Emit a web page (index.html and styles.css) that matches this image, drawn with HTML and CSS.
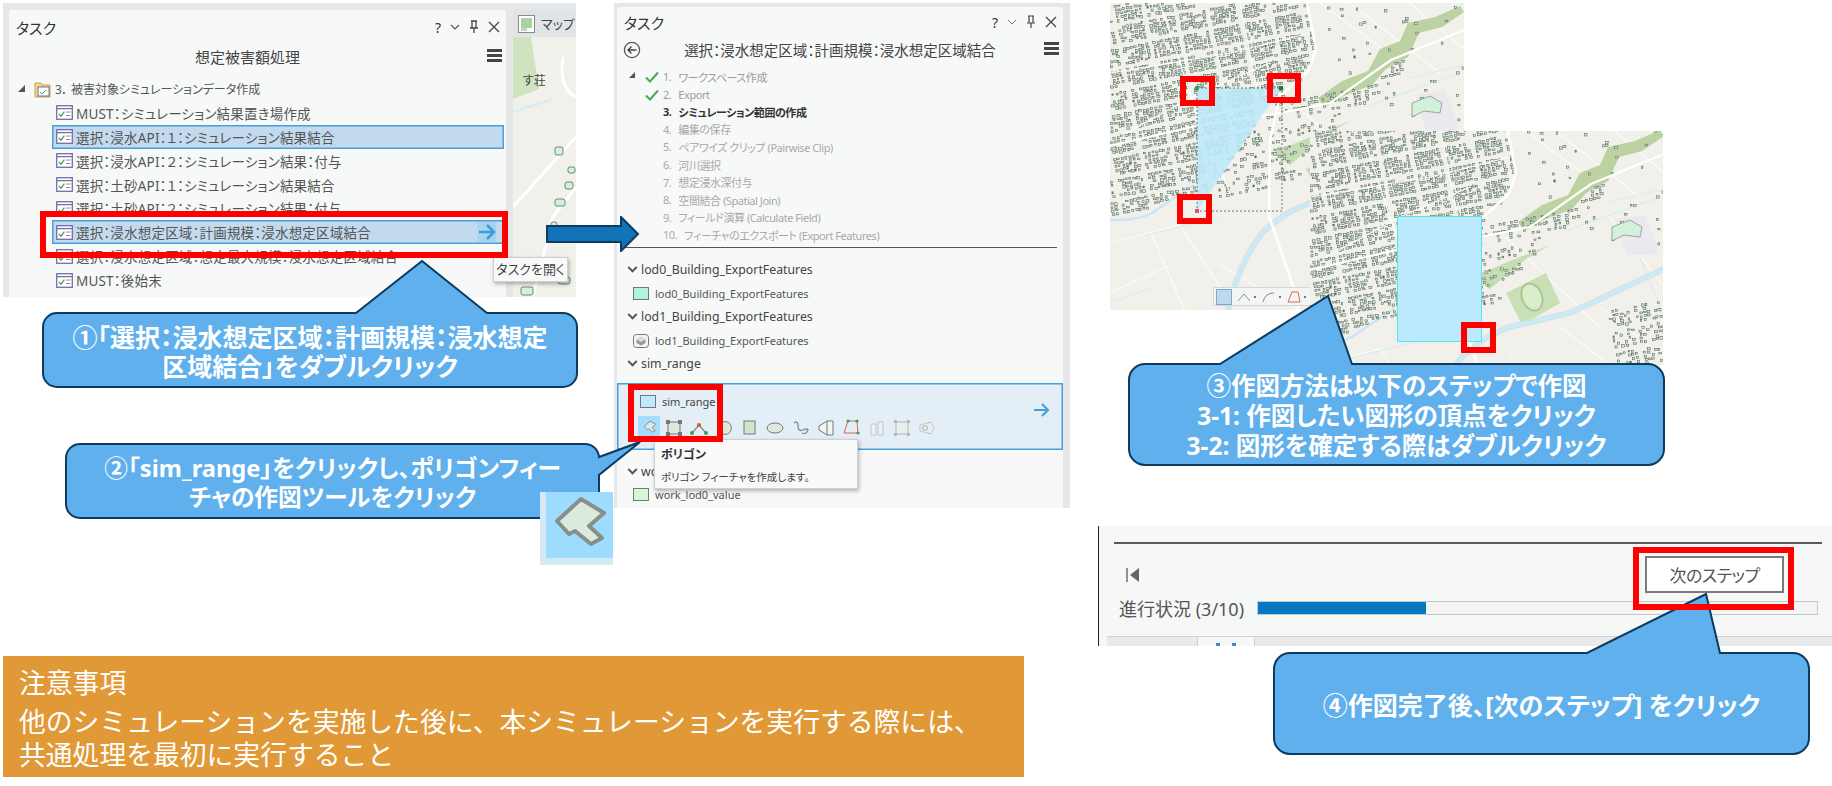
FILE: index.html
```html
<!DOCTYPE html>
<html lang="ja">
<head>
    <meta charset="UTF-8">
    <title>シミュレーション範囲の作成</title>
    <link rel="stylesheet" href="styles.css">
</head>
<body>
<!-- shared icons and the base map -->
<svg class="defs" aria-hidden="true">
    <defs>
        <filter id="soft"><feGaussianBlur stdDeviation=".25"/></filter>
        <symbol id="basemap" viewBox="0 0 354 320">
            <rect width="354" height="320" fill="#f1f0ea"/>
            <path d="M210 0 L292 60 M240 0 L330 70 M300 0 L354 46 M0 240 L70 222 L120 300 M40 228 L80 320 M0 290 L60 262 M110 262 L210 320 M200 230 L290 320 M250 200 L354 280 M290 180 L354 230 M195 110 L290 200 M300 90 L354 160" fill="none" stroke="#fbfbf8" stroke-width="1.2"/>
            <path d="M36 232 L110 214 M170 300 L260 240 M0 300 L40 285 M300 75 L354 62 M255 104 L345 72 M330 130 L354 190" fill="none" stroke="#d4ecf6" stroke-width="1.1"/>
            <path d="M306 92 L335 88 L347 118 L347 128 L316 128 Z" fill="#ece8f0"/>
            <path d="M208 95 L232 78 L258 68 L270 46 L290 38 L298 20 L325 14 L350 3 L354 9 L332 24 L309 30 L298 54 L276 66 L262 82 L236 92 L214 104 Z" fill="#bcd2a2"/>
            <path d="M162 150 L205 132 L240 118 L216 132 L180 162 Z" fill="#c6dcb2"/>
            <path d="M196 166 L236 146 L250 176 L212 198 Z" fill="#c9dfb6"/>
            <ellipse cx="222" cy="170" rx="10" ry="14" fill="#dcedcc" stroke="#a9c994" stroke-width="2" transform="rotate(-22 222 170)"/>
            <path d="M0 217 Q26 218 42 210 Q62 196 84 182" fill="none" stroke="#c6e6f5" stroke-width="2.4"/>
            <path d="M118 307 Q128 262 152 230 Q172 210 200 200 L260 186 L354 142" fill="none" stroke="#dcdfd8" stroke-width="6"/>
            <path d="M118 307 Q128 262 152 230 Q172 210 200 200 L260 186 L354 142" fill="none" stroke="#c8ebfa" stroke-width="4"/>
            <g id="houses" filter="url(#soft)" fill="#d3f0da" stroke="#56625a" stroke-width=".55"></g>
            <path d="M302 100 L320 93 L332 100 L330 110 L314 108 L302 114 Z" fill="#d3f0da" stroke="#69756c" stroke-width=".6"/>
            <path d="M197 0 L206 46 L199 67 L170 93 L160 137 L159 213 L182 280 L192 320" fill="none" stroke="#fff" stroke-width="2.6"/>
            <path d="M0 143 L86 123 L170 110 L220 100 L281 57 L354 27" fill="none" stroke="#fff" stroke-width="2.2"/>
            <path d="M50 0 L90 120 L120 190 M0 70 L120 50 L200 30 M16 130 L90 90 L160 60 M130 0 L150 100" fill="none" stroke="#fff" stroke-width="1.1"/>
        </symbol>
        <symbol id="task-icon" viewBox="0 0 17 15">
            <rect x=".7" y=".7" width="15.6" height="13.6" fill="#fff" stroke="#7a6bab" stroke-width="1.3"/>
            <path d="M1 3.6H16" stroke="#7a6bab" stroke-width="1.3"/>
            <path d="M3 9L5 11.2L8.4 6.6" fill="none" stroke="#3f9e4d" stroke-width="1.2"/>
            <path d="M10 7H14.5M10 10.5H14.5" stroke="#8c8c9c"/>
        </symbol>
        <symbol id="polygon-icon" viewBox="0 0 73 73">
            <path d="M17 30L41 8L64 22L49 35L62 47L51 53L35 40L29 43Z" fill="#dceadb" stroke="#85908a" stroke-width="4" stroke-linejoin="round"/>
        </symbol>
    </defs>
</svg>

<main class="canvas">
    <!-- first screenshot: task list -->
    <section class="shot shot-tasks">
        <div class="pane">
            <div class="pane-title">
                <span>タスク</span>
                <span class="window-tools">
                    <i>?</i>
                    <svg width="10" height="10" viewBox="0 0 10 10"><path d="M1 3L5 7L9 3" fill="none" stroke="#555" stroke-width="1.2"/></svg>
                    <svg width="10" height="14" viewBox="0 0 10 14"><path d="M2 1H8M3 1V8H7V1M1 8H9M5 8V13" fill="none" stroke="#444" stroke-width="1.3"/></svg>
                    <svg width="12" height="12" viewBox="0 0 12 12"><path d="M1 1L11 11M11 1L1 11" stroke="#444" stroke-width="1.3"/></svg>
                </span>
            </div>
            <div class="pane-sub pane-sub-tasks">
                <span>想定被害額処理</span>
                <span class="burger"></span>
            </div>
            <ul class="tree">
                <li class="tree-head">
                    <span class="twist"></span>
                    <svg width="17" height="18" viewBox="0 0 17 18"><path d="M1 3H7L8 5H16V17H1Z" fill="#f0d98a" stroke="#c2a542"/><rect x="4" y="7" width="11" height="9" fill="#fff" stroke="#7a6bab"/><path d="M6 12L8 14L12 10" fill="none" stroke="#3f9e4d"/></svg>
                    <span>3． 被害対象シミュレーションデータ作成</span>
                </li>
                <li><svg class="task-ic"><use href="#task-icon"/></svg>MUST：シミュレーション結果置き場作成</li>
                <li class="on"><svg class="task-ic"><use href="#task-icon"/></svg>選択：浸水API：１：シミュレーション結果結合</li>
                <li><svg class="task-ic"><use href="#task-icon"/></svg>選択：浸水API：２：シミュレーション結果：付与</li>
                <li><svg class="task-ic"><use href="#task-icon"/></svg>選択：土砂API：１：シミュレーション結果結合</li>
                <li><svg class="task-ic"><use href="#task-icon"/></svg>選択：土砂API：２：シミュレーション結果：付与</li>
                <li class="on">
                    <svg class="task-ic"><use href="#task-icon"/></svg>選択：浸水想定区域：計画規模：浸水想定区域結合
                    <svg class="open-arrow" width="18" height="20" viewBox="0 0 18 20"><rect width="18" height="20" fill="#a9d4f0"/><path d="M1 10H15M9 3L16 10L9 17" fill="none" stroke="#3e9bd8" stroke-width="2.6"/></svg>
                </li>
                <li><svg class="task-ic"><use href="#task-icon"/></svg>選択：浸水想定区域：想定最大規模：浸水想定区域結合</li>
                <li><svg class="task-ic"><use href="#task-icon"/></svg>MUST：後始末</li>
            </ul>
        </div>
        <div class="map-side">
            <div class="map-tab">
                <svg width="17" height="18" viewBox="0 0 17 18"><rect x=".5" y=".5" width="16" height="17" fill="#fff" stroke="#8a8a8a"/><rect x="3" y="3" width="11" height="10" fill="#a9d3a0"/><rect x="3" y="13" width="6" height="3" fill="#ccc"/></svg>
                <span>マップ</span>
            </div>
            <div class="map-peek">
                <svg width="63" height="260" viewBox="0 0 63 260">
                    <path d="M0 0H18L26 52L0 62Z" fill="#cfe3bf"/>
                    <path d="M0 75L40 62" stroke="#d4ecf6" stroke-width="2"/>
                    <path d="M50 20Q45 50 63 60M0 170L63 100M20 260L40 180L63 150" fill="none" stroke="#fff" stroke-width="3"/>
                    <g fill="#d3f0da" stroke="#6d8a74">
                        <rect x="42" y="110" width="8" height="8" rx="2"/><rect x="55" y="130" width="7" height="6" rx="2"/><rect x="52" y="145" width="8" height="7" rx="2"/><rect x="42" y="162" width="10" height="7" rx="2"/><rect x="38" y="185" width="6" height="5" rx="2"/><rect x="36" y="195" width="12" height="9" rx="2"/><rect x="10" y="222" width="9" height="9" rx="2"/><rect x="12" y="236" width="10" height="8" rx="2"/><rect x="45" y="240" width="12" height="7" rx="2"/><rect x="8" y="250" width="12" height="8" rx="2"/>
                    </g>
                    <text x="10" y="48" font-size="12" fill="#444">す荘</text>
                </svg>
            </div>
        </div>
    </section>
    <div class="tip tip-open">タスクを開く</div>

    <!-- second screenshot: step panel -->
    <section class="shot shot-steps">
        <div class="pane pane-steps">
            <div class="pane-title">
                <span>タスク</span>
                <span class="window-tools">
                    <i>?</i>
                    <svg width="10" height="10" viewBox="0 0 10 10"><path d="M1 3L5 7L9 3" fill="none" stroke="#777" stroke-width="1"/></svg>
                    <svg width="10" height="14" viewBox="0 0 10 14"><path d="M2 1H8M3 1V8H7V1M1 8H9M5 8V13" fill="none" stroke="#444" stroke-width="1.2"/></svg>
                    <svg width="12" height="12" viewBox="0 0 12 12"><path d="M1 1L11 11M11 1L1 11" stroke="#444" stroke-width="1.2"/></svg>
                </span>
            </div>
            <div class="pane-sub">
                <svg class="back" width="18" height="18" viewBox="0 0 18 18"><circle cx="9" cy="9" r="7.6" fill="none" stroke="#555" stroke-width="1.3"/><path d="M13.5 9H5M8.5 5.5L5 9L8.5 12.5" fill="none" stroke="#444" stroke-width="1.4"/></svg>
                <span>選択：浸水想定区域：計画規模：浸水想定区域結合</span>
                <span class="burger"></span>
            </div>
            <ol class="steps">
                <li class="done"><span class="twist"></span><svg class="check" width="14" height="12" viewBox="0 0 14 12"><path d="M1 6.5L5 10.5L13 1.5" fill="none" stroke="#4ea755" stroke-width="2"/></svg><b>1.</b>ワークスペース作成</li>
                <li class="done"><svg class="check" width="14" height="12" viewBox="0 0 14 12"><path d="M1 6.5L5 10.5L13 1.5" fill="none" stroke="#4ea755" stroke-width="2"/></svg><b>2.</b>Export</li>
                <li class="now"><b>3.</b>シミュレーション範囲の作成</li>
                <li><b>4.</b>編集の保存</li>
                <li><b>5.</b>ペアワイズ クリップ (Pairwise Clip)</li>
                <li><b>6.</b>河川選択</li>
                <li><b>7.</b>想定浸水深付与</li>
                <li><b>8.</b>空間結合 (Spatial Join)</li>
                <li><b>9.</b>フィールド演算 (Calculate Field)</li>
                <li><b>10.</b>フィーチャのエクスポート (Export Features)</li>
            </ol>
            <hr class="rule">
            <div class="templates">
                <h4>lod0_Building_ExportFeatures</h4>
                <p><span class="swatch swatch-mint"></span>lod0_Building_ExportFeatures</p>
                <h4>lod1_Building_ExportFeatures</h4>
                <p>
                    <svg class="swatch-svg" width="16" height="14" viewBox="0 0 16 14"><rect x=".5" y=".5" width="15" height="13" rx="3" fill="#f4f4f4" stroke="#777"/><path d="M8 3L12.5 5.5V9L8 11.5L3.5 9V5.5Z" fill="#999"/><path d="M3.5 5.5L8 8L12.5 5.5L8 3Z" fill="#ddd"/></svg>
                    lod1_Building_ExportFeatures
                </p>
                <h4>sim_range</h4>
            </div>
            <div class="template-on">
                <p class="template-name"><span class="swatch swatch-sky"></span>sim_range</p>
                <div class="tools">
                    <span class="tool tool-on"><svg width="18" height="18"><use href="#polygon-icon"/></svg></span>
                    <span class="tool"><svg width="18" height="16" viewBox="0 0 18 16"><rect x="3" y="2" width="12" height="12" fill="#dceadb" stroke="#777"/><path d="M1 0h4v4H1zM13 0h4v4h-4zM1 12h4v4H1zM13 12h4v4h-4z" fill="#777"/></svg></span>
                    <span class="tool"><svg width="18" height="14" viewBox="0 0 18 14"><path d="M2 12L9 4L16 12" fill="none" stroke="#888" stroke-width="1.2"/><circle cx="9" cy="4" r="2" fill="#e0533a"/><circle cx="2" cy="12" r="2" fill="#3f9e4d"/><circle cx="16" cy="12" r="2" fill="#3f9e4d"/></svg></span>
                    <span class="tool"><svg width="18" height="16" viewBox="0 0 18 16"><circle cx="9" cy="8" r="6.4" fill="#dceadb" stroke="#777"/></svg></span>
                    <span class="tool"><svg width="14" height="16" viewBox="0 0 14 16"><rect x="1" y="1" width="11" height="13" fill="#cfe6c8" stroke="#777"/></svg></span>
                    <span class="tool"><svg width="18" height="12" viewBox="0 0 18 12"><ellipse cx="9" cy="6" rx="8" ry="5" fill="#dceadb" stroke="#777"/></svg></span>
                    <span class="tool"><svg width="18" height="16" viewBox="0 0 18 16"><path d="M2 3Q6 0 6 6T11 10T16 10Q14 15 10 13" fill="none" stroke="#888" stroke-width="1.3"/></svg></span>
                    <span class="tool"><svg width="18" height="16" viewBox="0 0 18 16"><path d="M10 1H16V15H10L2 10V6Z" fill="#f1f5f1" stroke="#777"/><path d="M10 1V15" stroke="#777"/></svg></span>
                    <span class="tool"><svg width="18" height="18" viewBox="0 0 18 18"><path d="M6 2H15L16 14H2Z" fill="none" stroke="#d36b50"/><circle cx="6" cy="2" r="1.6" fill="#3f9e4d"/><circle cx="15" cy="2" r="1.6" fill="#3f9e4d"/><circle cx="16" cy="14" r="1.6" fill="#3f9e4d"/></svg></span>
                    <span class="tool tool-off"><svg width="16" height="16" viewBox="0 0 16 16"><path d="M2 4H7V15H2ZM9 2H14V15H9Z" fill="#f1f1f1" stroke="#bbb"/></svg></span>
                    <span class="tool tool-off"><svg width="18" height="16" viewBox="0 0 18 16"><rect x="3" y="2" width="12" height="12" fill="#eee" stroke="#aaa"/><path d="M1 0h3v3H1zM14 0h3v3h-3zM1 13h3v3H1zM14 13h3v3h-3z" fill="#aaa"/></svg></span>
                    <span class="tool tool-off"><svg width="16" height="14" viewBox="0 0 16 14"><path d="M1 4L12 1L15 7L12 13L1 10Z" fill="#eee" stroke="#bbb"/><circle cx="6" cy="7" r="2.4" fill="none" stroke="#999"/></svg></span>
                </div>
                <svg class="go" width="16" height="14" viewBox="0 0 16 14"><path d="M0 7H14M8 1L14 7L8 13" fill="none" stroke="#49a1dc" stroke-width="2.2"/></svg>
            </div>
            <div class="templates templates-last">
                <h4>work_lod0_value</h4>
                <p><span class="swatch swatch-leaf"></span>work_lod0_value</p>
            </div>
        </div>
        <div class="tip tip-polygon">
            <strong>ポリゴン</strong>
            <span>ポリゴン フィーチャを作成します。</span>
        </div>
    </section>

    <!-- maps -->
    <section class="shot shot-map-a">
        <svg class="map"><use href="#basemap" width="354" height="320"/></svg>
        <svg class="sketch" viewBox="0 0 354 307">
            <path d="M87 85H171L87 208Z" fill="#bce9fb" fill-opacity=".9"/>
            <path d="M87 85H172V208H87Z" fill="none" stroke="#555" stroke-width=".8" stroke-dasharray="2 2"/>
            <rect x="85" y="83" width="4" height="4" fill="#3f9e4d"/>
            <rect x="169" y="83" width="4" height="4" fill="#1e7a2e"/>
            <rect x="85" y="206" width="4" height="4" fill="#e8525a"/>
        </svg>
        <div class="edit-bar">
            <span class="edit-on"></span>
            <svg width="14" height="12" viewBox="0 0 14 12"><path d="M1 10L7 3L13 10" fill="none" stroke="#7aa07a"/></svg><i></i>
            <svg width="14" height="12" viewBox="0 0 14 12"><path d="M1 11Q3 2 12 2" fill="none" stroke="#888"/></svg><i></i>
            <svg width="14" height="14" viewBox="0 0 14 14"><path d="M5 2H11L13 12H1Z" fill="none" stroke="#d36b50"/></svg><i></i>
        </div>
    </section>
    <section class="shot shot-map-b">
        <svg class="map"><use href="#basemap" y="-4" width="354" height="320"/></svg>
        <div class="sim-rect"></div>
    </section>

    <!-- third screenshot: next step footer -->
    <section class="shot shot-next">
        <hr class="rule-next">
        <div class="next-row">
            <svg width="16" height="16" viewBox="0 0 16 16"><path d="M2 1V15" stroke="#777" stroke-width="1.6"/><path d="M14 1V15L5 8Z" fill="#666"/></svg>
            <button class="next-btn">次のステップ</button>
        </div>
        <div class="progress-row">
            <span class="progress-label">進行状況 (3/10)</span>
            <div class="bar"><div class="bar-fill"></div></div>
        </div>
        <div class="tab-row">
            <span class="tab-open"><i></i><i></i></span>
        </div>
    </section>

    <!-- arrow between panels -->
    <svg class="jump-arrow" width="94" height="36" viewBox="0 0 94 36"><path d="M1 10H75V1L92 18L75 35V26H1Z" fill="#1273b8" stroke="#0d3c63" stroke-width="2"/></svg>

    <!-- callouts -->
    <div class="callout callout-1">
        <svg class="callout-shape" viewBox="0 0 534 74"><path d="M14 0H313L379 -52L444 0H520A14 14 0 0 1 534 14V60A14 14 0 0 1 520 74H14A14 14 0 0 1 0 60V14A14 14 0 0 1 14 0Z"/></svg>
        <p>①「選択：浸水想定区域：計画規模：浸水想定<br>区域結合」をダブルクリック</p>
    </div>
    <div class="callout callout-2">
        <svg class="callout-shape" viewBox="0 0 533 74"><path d="M14 0H519A14 14 0 0 1 533 13L574 -2L533 31V60A14 14 0 0 1 519 74H14A14 14 0 0 1 0 60V14A14 14 0 0 1 14 0Z"/></svg>
        <p>②「sim_range」をクリックし、ポリゴンフィー<br>チャの作図ツールをクリック</p>
    </div>
    <div class="callout callout-3">
        <svg class="callout-shape" viewBox="0 0 535 101"><path d="M16 0H91L199 -68L223 0H519A16 16 0 0 1 535 16V85A16 16 0 0 1 519 101H16A16 16 0 0 1 0 85V16A16 16 0 0 1 16 0Z"/></svg>
        <p>③作図方法は以下のステップで作図<br>3-1: 作図したい図形の頂点をクリック<br>3-2: 図形を確定する際はダブルクリック</p>
    </div>
    <div class="callout callout-4">
        <svg class="callout-shape" viewBox="0 0 535 101"><path d="M16 0H313L432 -59L446 0H519A16 16 0 0 1 535 16V85A16 16 0 0 1 519 101H16A16 16 0 0 1 0 85V16A16 16 0 0 1 16 0Z"/></svg>
        <p>④作図完了後、[次のステップ] をクリック</p>
    </div>

    <!-- enlarged polygon tool -->
    <div class="tool-zoom"><svg width="73" height="73"><use href="#polygon-icon"/></svg></div>

    <!-- red highlights -->
    <div class="mark mark-row"></div>
    <div class="mark mark-tools"></div>
    <div class="mark mark-v1"></div>
    <div class="mark mark-v2"></div>
    <div class="mark mark-v3"></div>
    <div class="mark mark-v4"></div>
    <div class="mark mark-next"></div>

    <aside class="notice">
        <p>注意事項</p>
        <p class="notice-body">他のシミュレーションを実施した後に、本シミュレーションを実行する際には、</p>
        <p class="notice-end">共通処理を最初に実行すること</p>
    </aside>
</main>
<script src="map.js"></script>
</body>
</html>
```

FILE: styles.css
```css
body {
    margin: 0;
    background: #ffffff;
    font-family: "Noto Sans", "Noto Sans CJK JP", sans-serif;
    font-feature-settings: "palt";
    color: #444;
    overflow: hidden;
}
.defs {
    position: absolute;
    width: 0;
    height: 0;
}
.canvas {
    position: relative;
    width: 1832px;
    height: 786px;
    overflow: hidden;
}
.shot {
    position: absolute;
    overflow: hidden;
}

/* task list screenshot */
.shot-tasks {
    left: 3px;
    top: 3px;
    width: 573px;
    height: 294px;
    background: #e6e7e8;
    display: flex;
    gap: 7px;
    padding: 7px 0 0 6px;
    box-sizing: border-box;
}
.pane {
    width: 497px;
    background: #f7f9f9;
    border-radius: 3px 3px 0 0;
    flex: none;
}
.pane-title {
    display: flex;
    justify-content: space-between;
    align-items: center;
    height: 34px;
    padding: 0 6px 0 7px;
    font-size: 15px;
    color: #333;
}
.window-tools {
    display: flex;
    align-items: center;
    gap: 9px;
}
.window-tools i {
    font-style: normal;
    font-size: 14px;
}
.pane-sub {
    position: relative;
    height: 24px;
    display: flex;
    justify-content: center;
    align-items: center;
    font-size: 15px;
    color: #444;
}
.pane-sub-tasks {
    padding-right: 20px;
}
.burger {
    position: absolute;
    right: 4px;
    top: 5px;
    width: 15px;
    height: 3px;
    background: #444;
    box-shadow: 0 5px 0 #444, 0 10px 0 #444;
}
.tree {
    list-style: none;
    margin: 9px 0 0;
    padding: 0;
    font-size: 13.5px;
    letter-spacing: .2px;
    color: #555;
}
.tree li {
    height: 23.9px;
    display: flex;
    align-items: center;
    padding-left: 47px;
    position: relative;
    white-space: nowrap;
    box-sizing: border-box;
}
.tree .tree-head {
    padding-left: 9px;
    gap: 4px;
    font-size: 12px;
    letter-spacing: 0;
}
.twist {
    width: 0;
    height: 0;
    border-style: solid;
    border-width: 0 0 7px 7px;
    border-color: transparent transparent #555 transparent;
    margin-right: 5px;
}
.tree li.on {
    background: #c3daee;
    box-shadow: inset 0 0 0 1.5px #4a9fd8;
    margin-left: 43px;
    margin-right: 2px;
    padding-left: 4px;
}
.task-ic {
    width: 17px;
    height: 15px;
    margin-right: 3px;
    flex: none;
}
.open-arrow {
    position: absolute;
    right: 8px;
    top: 2px;
}
.map-side {
    flex: 1;
    display: flex;
    flex-direction: column;
}
.map-tab {
    height: 27px;
    display: flex;
    align-items: center;
    gap: 6px;
    padding-left: 5px;
    font-size: 13px;
    background: #e1e4e6;
    white-space: nowrap;
    border-radius: 3px 0 0 0;
}
.map-peek {
    flex: 1;
    background: #f1f0ea;
}
.map-peek svg {
    display: block;
}
.tip {
    position: absolute;
    background: #f9f9f9;
    border: 1px solid #d0d0d0;
    box-shadow: 1px 2px 4px rgba(0, 0, 0, 0.3);
    color: #444;
    box-sizing: border-box;
}
.tip-open {
    left: 493px;
    top: 257px;
    width: 75px;
    height: 25px;
    line-height: 23px;
    text-align: center;
    font-size: 13px;
}

/* step panel screenshot */
.shot-steps {
    left: 614px;
    top: 3px;
    width: 456px;
    height: 505px;
    background: #e6e7e8;
    padding: 4px 0 0 3px;
    box-sizing: border-box;
}
.pane-steps {
    width: 446px;
    height: 501px;
}
.pane-steps .pane-title {
    height: 30px;
}
.pane-steps .pane-sub {
    font-size: 14.5px;
    height: 24px;
}
.back {
    position: absolute;
    left: 6px;
    top: 4px;
}
.steps {
    list-style: none;
    margin: 7px 0 0;
    padding: 0 0 0 46px;
    font-size: 11px;
    letter-spacing: -.45px;
    color: #a8a8a8;
}
.steps li {
    height: 17.55px;
    display: flex;
    align-items: center;
    position: relative;
    white-space: nowrap;
}
.steps b {
    font-weight: 400;
    margin-right: 7px;
}
.steps .done {
    color: #9c9c9c;
}
.steps .now {
    color: #333;
    font-weight: 700;
}
.steps .now b {
    font-weight: 700;
}
.steps .twist {
    position: absolute;
    left: -34px;
    top: 4px;
    border-width: 0 0 6px 6px;
}
.check {
    position: absolute;
    left: -18px;
    top: 3px;
}
.rule {
    margin: 4px 6px 0;
    border: 0;
    border-top: 1px solid #555;
}
.templates {
    margin-top: 10px;
    padding-left: 11px;
    color: #555;
}
.templates h4 {
    margin: 0;
    height: 24px;
    line-height: 24px;
    font-size: 12.3px;
    font-weight: 400;
    color: #444;
    display: flex;
    align-items: center;
}
.templates h4::before {
    content: "";
    width: 5px;
    height: 5px;
    border-right: 2px solid #555;
    border-bottom: 2px solid #555;
    transform: rotate(45deg) translate(-2px, -2px);
    margin-right: 5px;
    margin-left: 1px;
}
.templates p {
    margin: 0;
    height: 23px;
    display: flex;
    align-items: center;
    padding-left: 5px;
    font-size: 11px;
    gap: 6px;
}
.swatch {
    width: 14px;
    height: 11px;
    border: 1px solid #777;
    flex: none;
}
.swatch-mint { background: #aef5dc; }
.swatch-sky { background: #bee8fb; }
.swatch-leaf { background: #d5f7d5; }
.template-on {
    position: relative;
    height: 67px;
    margin-top: 7px;
    background: #e3eef6;
    box-shadow: inset 0 0 0 1.5px #4a9fd8;
    box-sizing: border-box;
    padding: 5px 0 0 21px;
    font-size: 11px;
}
.templates-last {
    margin-top: 10px;
}
.templates-last p {
    height: 20px;
}
.template-name {
    margin: 6px 0 8px 2px;
    display: flex;
    align-items: center;
    gap: 6px;
    height: 14px;
}
.tools {
    display: flex;
    align-items: center;
}
.tool {
    width: 25.3px;
    height: 23px;
    display: flex;
    justify-content: center;
    align-items: center;
    flex: none;
}
.tool-on {
    width: 22px;
    margin-right: 1.5px;
    background: #a5dcff;
}
.tool-off {
    opacity: 0.8;
}
.go {
    position: absolute;
    right: 13px;
    top: 20px;
}
.tip-polygon {
    position: absolute;
    left: 40px;
    top: 436px;
    width: 204px;
    height: 50px;
    padding: 5px 6px;
    font-size: 10.5px;
    display: flex;
    flex-direction: column;
    gap: 6px;
}
.tip-polygon strong {
    color: #333;
    font-size: 12px;
}

/* maps */
.shot-map-a {
    left: 1110px;
    top: 3px;
    width: 354px;
    height: 307px;
}
.shot-map-b {
    left: 1310px;
    top: 131px;
    width: 353px;
    height: 234px;
}
.map {
    display: block;
    width: 354px;
    height: 320px;
}
.sketch {
    position: absolute;
    left: 0;
    top: 0;
    width: 354px;
    height: 307px;
}
.edit-bar {
    position: absolute;
    left: 103px;
    top: 284px;
    width: 100px;
    height: 19px;
    background: #f4f6f6;
    border: 1px solid #d6d6d6;
    display: flex;
    align-items: center;
    gap: 3px;
    padding-left: 2px;
    box-sizing: border-box;
}
.edit-on {
    width: 14px;
    height: 14px;
    background: #bcd7ee;
    border: 1px solid #7fa9cc;
    margin-right: 2px;
    flex: none;
}
.edit-bar i {
    width: 2px;
    height: 2px;
    background: #777;
    margin-right: 3px;
}
.sim-rect {
    position: absolute;
    left: 87px;
    top: 85px;
    width: 83px;
    height: 124px;
    background: #bce9fb;
    border: 1px solid #4fe8ee;
}

/* next step footer */
.shot-next {
    left: 1098px;
    top: 526px;
    width: 734px;
    height: 120px;
    background: #f6f8f8;
    border-left: 1px solid #222;
    box-sizing: border-box;
}
.rule-next {
    margin: 16px 10px 0 15px;
    border: 0;
    border-top: 2px solid #5a5a5a;
}
.next-row {
    display: flex;
    justify-content: space-between;
    align-items: center;
    margin: 12px 48px 0 26px;
}
.next-btn {
    width: 139px;
    height: 37px;
    background: #fff;
    border: 2px solid #7a7a7a;
    font: inherit;
    font-size: 17px;
    letter-spacing: -.5px;
    color: #555;
    padding: 0;
}
.progress-row {
    display: flex;
    align-items: center;
    margin: 8px 14px 0 20px;
    font-size: 18px;
    color: #555;
    height: 14px;
}
.progress-label {
    width: 138px;
    white-space: nowrap;
    flex: none;
}
.bar {
    flex: 1;
    height: 14px;
    background: #f4f5f5;
    border: 1px solid #c4c8cc;
    box-sizing: border-box;
}
.bar-fill {
    width: 30%;
    height: 100%;
    background: #0079c1;
}
.tab-row {
    margin: 21px 0 0 8px;
    height: 9px;
    background: #e9eaeb;
    border-top: 1px solid #cfd1d3;
    position: relative;
}
.tab-open {
    position: absolute;
    left: 90px;
    top: -1px;
    width: 58px;
    height: 10px;
    background: #f6f8f8;
    border: 1px solid #cfd1d3;
    border-bottom: 0;
    box-sizing: border-box;
    display: flex;
    justify-content: center;
    gap: 12px;
    padding-top: 6px;
}
.tab-open i {
    width: 4px;
    height: 3px;
    background: #3a88c8;
}

/* arrow, callouts, marks */
.jump-arrow {
    position: absolute;
    left: 546px;
    top: 216px;
}
.callout {
    position: absolute;
    display: flex;
    justify-content: center;
    align-items: center;
    color: #fff;
    font-weight: 700;
    text-align: center;
    font-size: 25px;
    line-height: 29px;
    padding-top: 3px;
    box-sizing: border-box;
}
.callout p {
    position: relative;
    margin: 0;
}
.callout-shape {
    position: absolute;
    left: 0;
    top: 0;
    width: 100%;
    height: 100%;
    overflow: visible;
}
.callout-shape path {
    fill: #5fb0ec;
    stroke: #0d3a5f;
    stroke-width: 2;
}
.callout-1 { left: 43px; top: 313px; width: 534px; height: 74px; }
.callout-2 { left: 66px; top: 444px; width: 533px; height: 74px; font-size: 23.7px; }
.callout-3 { left: 1129px; top: 364px; width: 535px; height: 101px; line-height: 30px; font-size: 24.5px; }
.callout-4 { left: 1274px; top: 653px; width: 535px; height: 101px; }
.tool-zoom {
    position: absolute;
    left: 540px;
    top: 492px;
    width: 73px;
    height: 73px;
    background: #9edcff;
    border-left: 6px solid #d5e9f5;
    border-bottom: 7px solid #d5e9f5;
    box-sizing: border-box;
}
.tool-zoom svg {
    display: block;
    margin: -1px 0 0 -6px;
}
.mark {
    position: absolute;
    border: 6px solid #ff0000;
    box-sizing: border-box;
}
.mark-row { left: 40px; top: 211px; width: 468px; height: 47px; }
.mark-tools { left: 628px; top: 384px; width: 95px; height: 58px; }
.mark-v1 { left: 1180px; top: 76px; width: 35px; height: 30px; }
.mark-v2 { left: 1267px; top: 73px; width: 34px; height: 30px; }
.mark-v3 { left: 1177px; top: 194px; width: 35px; height: 30px; }
.mark-v4 { left: 1461px; top: 322px; width: 35px; height: 31px; }
.mark-next { left: 1633px; top: 547px; width: 161px; height: 63px; }
.notice {
    position: absolute;
    left: 3px;
    top: 656px;
    width: 1021px;
    height: 121px;
    background: #e09936;
    color: #fff;
    font-size: 26.8px;
    font-feature-settings: normal;
    padding: 9px 16px 0;
    box-sizing: border-box;
    white-space: nowrap;
}
.notice p {
    margin: 0;
    height: 36px;
    line-height: 36px;
}
.notice .notice-body {
    margin-top: 3px;
}
.notice .notice-end {
    margin-top: -3px;
}
```

FILE: map.js
```js
// Scatter small houses over the base map, town by town
const townAreas = [
    { keep: 0.85, spots: [[0, 0], [197, 0], [205, 45], [190, 75], [150, 100], [130, 135], [90, 165], [75, 190], [20, 210], [0, 215]] },
    { keep: 0.4, spots: [[90, 100], [170, 90], [220, 100], [225, 125], [190, 175], [120, 195], [80, 190]] },
    { keep: 0.65, spots: [[170, 100], [230, 84], [262, 76], [288, 54], [298, 58], [264, 94], [226, 114], [176, 124]] },
    { keep: 0.5, spots: [[296, 180], [354, 170], [354, 240], [305, 240]] },
    { keep: 0.05, spots: [[205, 0], [354, 0], [354, 120], [240, 120]] }
];

// Same picture on every load
let seed = 11;
function rand() {
    seed = (seed * 16807) % 2147483647;
    return seed / 2147483647;
}

function inside(x, y, spots) {
    let hit = false;
    for (let i = 0, j = spots.length - 1; i < spots.length; j = i++) {
        const [xi, yi] = spots[i];
        const [xj, yj] = spots[j];
        if ((yi > y) !== (yj > y) && x < (xj - xi) * (y - yi) / (yj - yi) + xi) {
            hit = !hit;
        }
    }
    return hit;
}

const houses = document.getElementById('houses');
for (let row = -30; row < 100; row++) {
    for (let col = -30; col < 120; col++) {
        // every few rows and columns is a street
        if (row % 6 === 0 || col % 8 === 0) continue;
        const gx = col * 3.8;
        const gy = row * 3.5;
        const x = gx + gy * 0.2 + (rand() - 0.5) * 1.4;
        const y = gy - gx * 0.2 + (rand() - 0.5) * 1.2;
        const area = townAreas.find(a => inside(x, y, a.spots));
        if (!area || rand() > area.keep) continue;
        const house = document.createElementNS('http://www.w3.org/2000/svg', 'rect');
        house.setAttribute('x', x.toFixed(1));
        house.setAttribute('y', y.toFixed(1));
        house.setAttribute('width', (1.5 + rand() * 1.6).toFixed(1));
        house.setAttribute('height', (1.4 + rand() * 1.2).toFixed(1));
        houses.appendChild(house);
    }
}
```
